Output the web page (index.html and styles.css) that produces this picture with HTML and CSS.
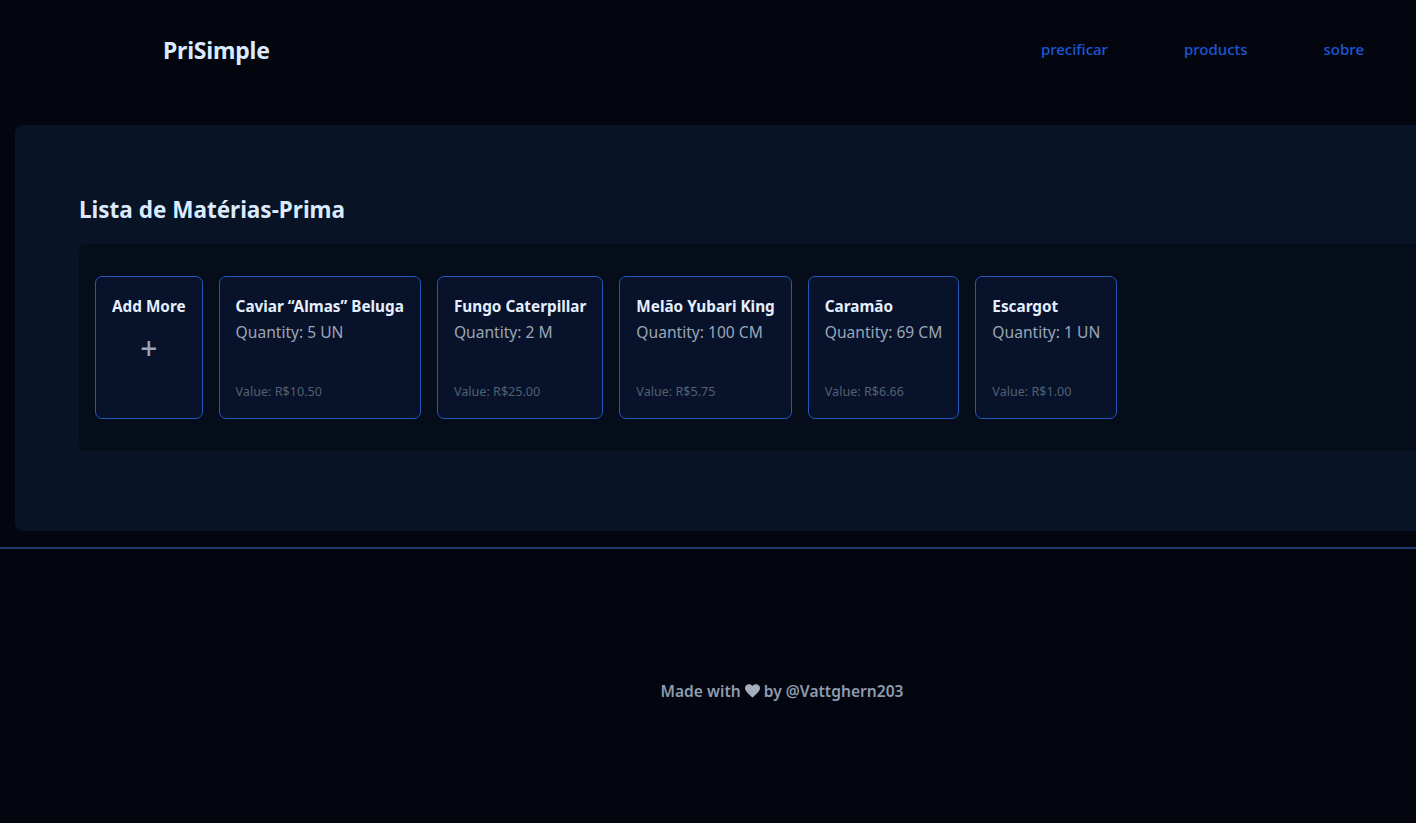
FILE: index.html
```html
<!DOCTYPE html>
<html lang="pt-BR">
<head>
<meta charset="utf-8">
<title>PriSimple</title>
<link rel="stylesheet" href="styles.css">
</head>
<body>
<header class="header">
  <div class="logo">PriSimple</div>
  <nav class="nav">
    <a href="#" class="nav-link">precificar</a>
    <a href="#" class="nav-link">products</a>
    <a href="#" class="nav-link">sobre</a>
  </nav>
</header>
<main class="panel">
  <h1 class="title">Lista de Matérias-Prima</h1>
  <section class="list">
    <div class="card card-add">
      <div class="card-name">Add More</div>
      <div class="plus">+</div>
    </div>
    <div class="card">
      <div class="card-name">Caviar “Almas” Beluga</div>
      <div class="card-qty">Quantity: 5 UN</div>
      <div class="card-value">Value: R$10.50</div>
    </div>
    <div class="card">
      <div class="card-name">Fungo Caterpillar</div>
      <div class="card-qty">Quantity: 2 M</div>
      <div class="card-value">Value: R$25.00</div>
    </div>
    <div class="card">
      <div class="card-name">Melão Yubari King</div>
      <div class="card-qty">Quantity: 100 CM</div>
      <div class="card-value">Value: R$5.75</div>
    </div>
    <div class="card">
      <div class="card-name">Caramão</div>
      <div class="card-qty">Quantity: 69 CM</div>
      <div class="card-value">Value: R$6.66</div>
    </div>
    <div class="card">
      <div class="card-name">Escargot</div>
      <div class="card-qty">Quantity: 1 UN</div>
      <div class="card-value">Value: R$1.00</div>
    </div>
  </section>
</main>
<footer class="footer">
  <p class="footer-text">Made with <svg class="heart" viewBox="0 0 24 22" width="15" height="14" aria-hidden="true"><path d="M12 21.5 10.3 20C4.2 14.5 0 10.8 0 6.3 0 2.7 2.8 0 6.4 0c2.1 0 4.1 1 5.6 2.5C13.5 1 15.5 0 17.6 0 21.2 0 24 2.7 24 6.3c0 4.5-4.2 8.2-10.3 13.7Z" fill="#a3afbf"/></svg> by @Vattghern203</p>
</footer>
</body>
</html>
```

FILE: styles.css
```css
html, body {
  margin: 0;
  padding: 0;
  overflow-x: hidden;
}
body {
  background: #03060e;
  font-family: "Noto Sans", "Open Sans", sans-serif;
  color: #dbeafe;
  min-height: 823px;
}
.header {
  height: 100px;
  display: flex;
  align-items: center;
  justify-content: space-between;
  padding: 0 52px 0 163px;
  box-sizing: border-box;
}
.logo {
  font-size: 23px;
  font-weight: 700;
  color: #dbeafe;
  letter-spacing: -0.2px;
}
.nav {
  display: flex;
  gap: 76px;
  margin-top: -2px;
}
.nav-link {
  color: #1d57d6;
  text-decoration: none;
  font-size: 15px;
  font-weight: 500;
}
.panel {
  margin: 25px 0 0 15px;
  width: 1500px;
  height: 406px;
  box-sizing: border-box;
  background: #081325;
  border-radius: 8px;
  padding: 70px 0 0 64px;
}
.title {
  margin: 0 0 20px 0;
  font-size: 22.5px;
  font-weight: 700;
  line-height: 29px;
  color: #dbeafe;
}
.list {
  background: #060d1a;
  border-radius: 6px;
  padding: 32px 16px;
  display: flex;
  gap: 16px;
}
.card {
  height: 143px;
  box-sizing: border-box;
  border: 1px solid #2358b8;
  border-radius: 7px;
  background: #08122a;
  padding: 18px 16px 18px 16px;
  display: flex;
  flex-direction: column;
}
.card-add {
  align-items: center;
}
.card-name {
  font-size: 15.3px;
  font-weight: 700;
  line-height: 22px;
  color: #e4efff;
  white-space: nowrap;
}
.card-qty {
  margin-top: 2px;
  font-size: 15.6px;
  line-height: 26px;
  color: #9aa6b6;
  white-space: nowrap;
}
.card-value {
  margin-top: auto;
  font-size: 12.6px;
  line-height: 16px;
  color: #526072;
}
.plus {
  margin-top: 14px;
  font-size: 30px;
  line-height: 34px;
  font-weight: 500;
  color: #9aa5b4;
}
.footer {
  margin-top: 16px;
  border-top: 2px solid #1c3a72;
  height: 272px;
  display: flex;
  align-items: center;
  justify-content: center;
  padding-left: 148px;
  padding-top: 14px;
  box-sizing: border-box;
}
.footer-text {
  margin: 0;
  font-size: 15.6px;
  font-weight: 600;
  color: #8d9bb0;
}
.heart {
  vertical-align: -1px;
}
```
